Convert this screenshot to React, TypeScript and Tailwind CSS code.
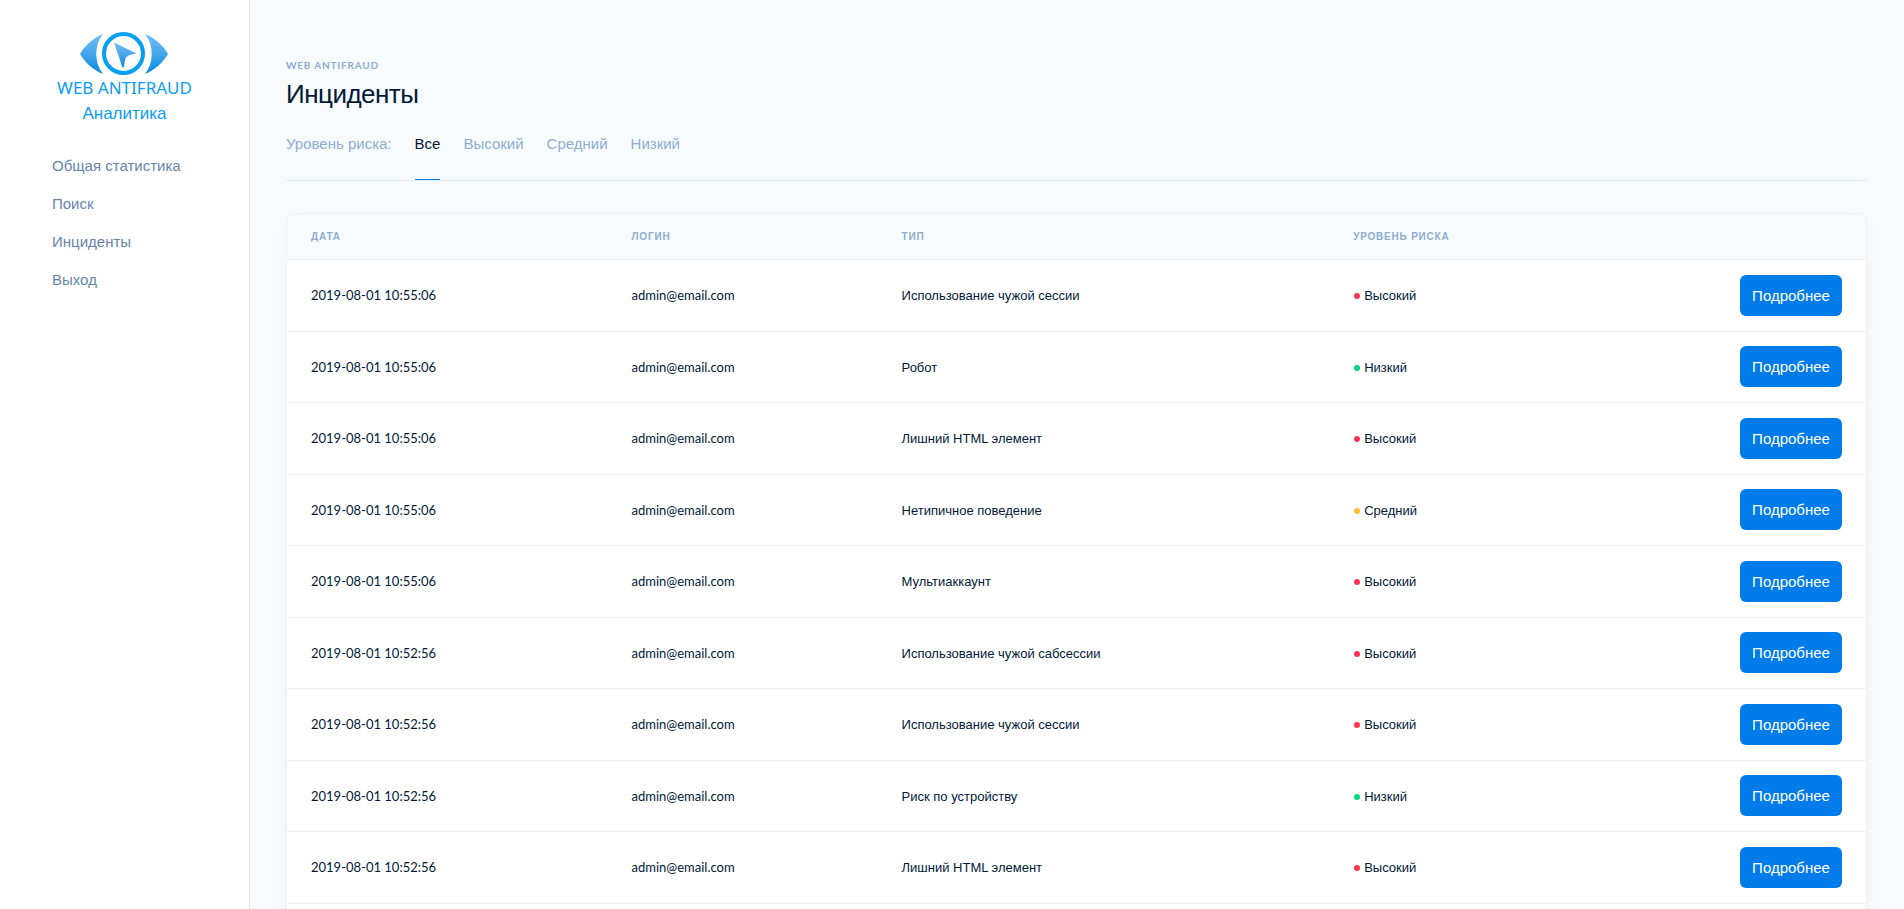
import { useState } from "react";
import clsx from "clsx";

type Risk = "high" | "medium" | "low";

interface Incident {
  date: string;
  login: string;
  type: string;
  risk: Risk;
}

const NAV_ITEMS = ["Общая статистика", "Поиск", "Инциденты", "Выход"];

const RISK_LABELS: Record<Risk, string> = {
  high: "Высокий",
  medium: "Средний",
  low: "Низкий",
};

const RISK_COLORS: Record<Risk, string> = {
  high: "bg-[#ff3352]",
  medium: "bg-[#ffc02e]",
  low: "bg-[#00d97e]",
};

const FILTERS: { value: Risk | "all"; label: string }[] = [
  { value: "all", label: "Все" },
  { value: "high", label: "Высокий" },
  { value: "medium", label: "Средний" },
  { value: "low", label: "Низкий" },
];

const INCIDENTS: Incident[] = [
  { date: "2019-08-01 10:55:06", login: "admin@email.com", type: "Использование чужой сессии", risk: "high" },
  { date: "2019-08-01 10:55:06", login: "admin@email.com", type: "Робот", risk: "low" },
  { date: "2019-08-01 10:55:06", login: "admin@email.com", type: "Лишний HTML элемент", risk: "high" },
  { date: "2019-08-01 10:55:06", login: "admin@email.com", type: "Нетипичное поведение", risk: "medium" },
  { date: "2019-08-01 10:55:06", login: "admin@email.com", type: "Мультиаккаунт", risk: "high" },
  { date: "2019-08-01 10:52:56", login: "admin@email.com", type: "Использование чужой сабсессии", risk: "high" },
  { date: "2019-08-01 10:52:56", login: "admin@email.com", type: "Использование чужой сессии", risk: "high" },
  { date: "2019-08-01 10:52:56", login: "admin@email.com", type: "Риск по устройству", risk: "low" },
  { date: "2019-08-01 10:52:56", login: "admin@email.com", type: "Лишний HTML элемент", risk: "high" },
];

function Logo() {
  return (
    <svg viewBox="0 0 90 44" className="h-11 w-[90px]" aria-hidden="true">
      <defs>
        <linearGradient id="eye" x1="0" y1="0" x2="0" y2="1">
          <stop offset="0" stopColor="#74bdf9" />
          <stop offset="0.5" stopColor="#43a6ea" />
          <stop offset="1" stopColor="#0489dc" />
        </linearGradient>
      </defs>
      <path d="M23 2C14 5.500 5 13 0 22c5 8.500 14 16.500 23 20C14 31 14 13 23 2Z" fill="url(#eye)" />
      <path d="M65 2c9 3.500 18 11 23 20-5 8.500-14 16.500-23 20 9-11 9-29 0-40Z" fill="url(#eye)" />
      <circle cx="43.500" cy="21.500" r="19.500" fill="none" stroke="#059ff5" strokeWidth="4" />
      <path d="M34 10.500 56.500 21.500c-5 1-9.500 1.500-11 5L43.500 36c-1.500-1-2-3-2.500-5Z" fill="url(#eye)" />
    </svg>
  );
}

function Sidebar() {
  return (
    <aside className="w-[250px] shrink-0 border-r border-[#e0eaf5] bg-white">
      <a href="#" className="flex flex-col items-center pt-8 text-[#0a9cf5]">
        <Logo />
        <span className="font-['Noto_Sans',sans-serif] text-[17px] leading-6">WEB ANTIFRAUD</span>
        <span className="text-[17px] leading-7">Аналитика</span>
      </a>
      <nav className="mt-[19px] flex flex-col">
        {NAV_ITEMS.map((item) => (
          <a key={item} href="#" className="py-2 pl-[52px] text-[15px] leading-[22px] text-[#6585aa] hover:text-[#00132e]">
            {item}
          </a>
        ))}
      </nav>
    </aside>
  );
}

export default function App() {
  const [filter, setFilter] = useState<Risk | "all">("all");
  const rows = INCIDENTS.filter((item) => filter === "all" || item.risk === filter);

  return (
    <div className="flex min-h-screen bg-[#f7fbfe] font-['Liberation_Sans',Arial,sans-serif] text-[#001a38]">
      <Sidebar />

      <main className="flex min-w-0 flex-1 flex-col pt-[55px] pr-[37px] pl-9">
        <header className="border-b border-[#deeaf6]">
          <p className="font-['Lato',sans-serif] text-[10px] leading-5 font-bold tracking-[0.08em] text-[#8eadd0]">
            WEB ANTIFRAUD
          </p>
          <h1 className="text-[26px] leading-[38px] tracking-[-0.02em]">Инциденты</h1>

          {/* Risk filter */}
          <div className="flex gap-[23px] text-[15px] leading-[22px] text-[#8eadd0]">
            <span className="pt-5">Уровень риска:</span>
            {FILTERS.map(({ value, label }) => (
              <button
                key={value}
                onClick={() => setFilter(value)}
                className={clsx(
                  "h-[67px] border-b pt-5 pb-6",
                  filter === value ? "border-[#007bea] text-[#001a38]" : "border-transparent",
                )}
              >
                {label}
              </button>
            ))}
          </div>
        </header>

        {/* Incident table */}
        <section className="mt-8 flex-1 rounded-t-lg border border-b-0 border-[#eaf1f8] bg-white shadow-[0_12px_24px_rgba(18,38,63,0.03)]">
          <table className="w-full table-fixed text-left text-[13px]">
            <thead className="text-[10px] tracking-[0.08em] text-[#8eadd0]">
              <tr className="h-[45px] border-b border-[#eaf1f8] bg-[#f7fbfe]">
                <th className="w-[20.3%] rounded-tl-lg px-6">ДАТА</th>
                <th className="w-[17.1%] px-6">ЛОГИН</th>
                <th className="w-[28.6%] px-6">ТИП</th>
                <th className="px-6">УРОВЕНЬ РИСКА</th>
                <th className="w-[150px] rounded-tr-lg px-6" aria-label="Действия" />
              </tr>
            </thead>
            <tbody>
              {rows.map(({ date, login, type, risk }, index) => (
                <tr key={index} className="h-[71px] border-b border-[#eaf1f8] odd:h-[72px]">
                  <td className="px-6 pt-0.5 font-['Lato',sans-serif]">{date}</td>
                  <td className="px-6 pt-0.5 font-['Lato',sans-serif]">{login}</td>
                  <td className="px-6 pt-0.5">{type}</td>
                  <td className="px-6 pt-0.5">
                    <span className="flex items-center gap-1">
                      <span className={clsx("ml-px size-1.5 rounded-full", RISK_COLORS[risk])} />
                      {RISK_LABELS[risk]}
                    </span>
                  </td>
                  <td className="px-6">
                    <button className="h-[41px] w-[102px] rounded-md bg-[#007bea] pt-0.5 text-[15px] text-white hover:bg-[#006fd3]">
                      Подробнее
                    </button>
                  </td>
                </tr>
              ))}
            </tbody>
          </table>
        </section>
      </main>
    </div>
  );
}
